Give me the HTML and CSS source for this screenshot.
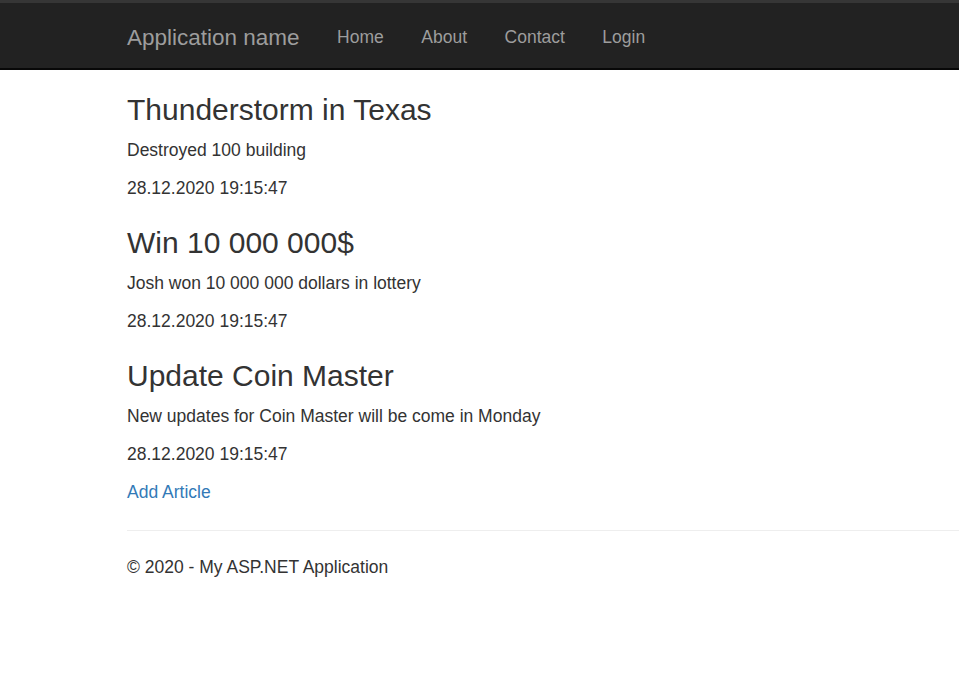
FILE: index.html
```html
<!DOCTYPE html>
<html lang="en">
<head>
<meta charset="utf-8">
<title>Index - My ASP.NET Application</title>
<link rel="stylesheet" href="styles.css">
</head>
<body>
<nav class="navbar">
  <div class="navbar-container">
    <a class="navbar-brand" href="#">Application name</a>
    <ul class="nav">
      <li><a href="#">Home</a></li>
      <li><a href="#">About</a></li>
      <li><a href="#">Contact</a></li>
      <li><a href="#">Login</a></li>
    </ul>
  </div>
</nav>
<div class="body-content">
  <div class="article">
    <h3 class="article-title">Thunderstorm in Texas</h3>
    <p>Destroyed 100 building</p>
    <p>28.12.2020 19:15:47</p>
  </div>
  <div class="article">
    <h3 class="article-title">Win 10 000 000$</h3>
    <p>Josh won 10 000 000 dollars in lottery</p>
    <p>28.12.2020 19:15:47</p>
  </div>
  <div class="article">
    <h3 class="article-title">Update Coin Master</h3>
    <p>New updates for Coin Master will be come in Monday</p>
    <p>28.12.2020 19:15:47</p>
  </div>
  <p class="add-row"><a class="link" href="#">Add Article</a></p>
  <hr class="divider">
  <footer class="footer">
    <p>&copy; 2020 - My ASP.NET Application</p>
  </footer>
</div>
</body>
</html>
```
FILE: styles.css
```css
html, body {
  margin: 0;
  padding: 0;
  background: #fff;
}

body {
  font-family: "Liberation Sans", Arial, Helvetica, sans-serif;
  font-size: 17.5px;
  line-height: 25px;
  color: #333;
  overflow-x: hidden;
}

a {
  text-decoration: none;
}

.navbar {
  background: #222;
  border-top: 3px solid #363636;
  border-bottom: 2px solid #080808;
  height: 65px;
  box-sizing: content-box;
}

.navbar-container {
  display: flex;
  align-items: flex-start;
  padding-top: 3px;
  padding-left: 108.25px;
}

.navbar-brand {
  display: block;
  padding: 18.75px;
  font-size: 22.5px;
  line-height: 25px;
  color: #9d9d9d;
}

.nav {
  display: flex;
  list-style: none;
  margin: 0;
  padding: 0;
}

.nav a {
  display: block;
  padding: 18.75px;
  font-size: 17.5px;
  line-height: 25px;
  color: #9d9d9d;
}

.body-content {
  padding: 23px 0 0 127px;
}

.article-title {
  font-size: 30px;
  line-height: 33px;
  font-weight: 500;
  margin: 25px 0 11.5px;
  color: #333;
}

.article:first-child .article-title {
  margin-top: 0;
}

p {
  margin: 0 0 13.5px;
}

.add-row {
  margin-top: -1px;
}

.link {
  color: #337ab7;
}

.divider {
  border: 0;
  border-top: 1px solid #eee;
  margin: 25.5px 0 24px;
}

.footer p {
  margin: 0;
}
```
